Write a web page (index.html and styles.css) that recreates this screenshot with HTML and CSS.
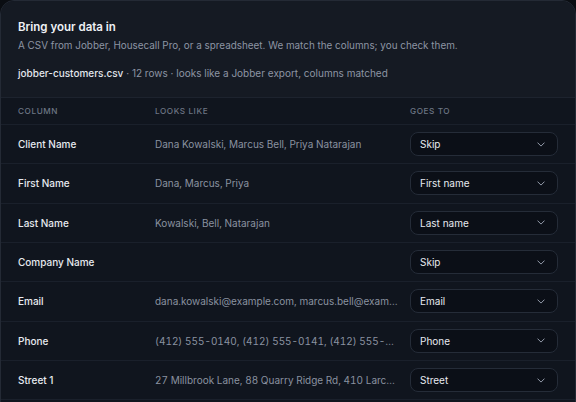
FILE: index.html
```html
<!DOCTYPE html>
<html>
<head>
<meta charset="utf-8">
<link rel="stylesheet" href="styles.css">
</head>
<body>
<div class="card">
  <div class="head">
    <h1 class="title">Bring your data in</h1>
    <p class="sub">A CSV from Jobber, Housecall Pro, or a spreadsheet. We match the columns; you check them.</p>
    <p class="file"><span class="fname">jobber-customers.csv</span> · 12 rows · looks like a Jobber export, columns matched</p>
  </div>
  <div class="table">
    <div class="row thead">
      <div class="c1">Column</div>
      <div class="c2">Looks like</div>
      <div class="c3">Goes to</div>
    </div>
    <div class="row">
      <div class="c1 name">Client Name</div>
      <div class="c2 sample">Dana Kowalski, Marcus Bell, Priya Natarajan</div>
      <div class="c3"><div class="select"><span>Skip</span><svg class="chev" viewBox="0 0 10 6" width="8" height="5"><path d="M1 1l4 4 4-4" fill="none" stroke="#9aa2b1" stroke-width="1.2" stroke-linecap="round" stroke-linejoin="round"/></svg></div></div>
    </div>
    <div class="row">
      <div class="c1 name">First Name</div>
      <div class="c2 sample">Dana, Marcus, Priya</div>
      <div class="c3"><div class="select"><span>First name</span><svg class="chev" viewBox="0 0 10 6" width="8" height="5"><path d="M1 1l4 4 4-4" fill="none" stroke="#9aa2b1" stroke-width="1.2" stroke-linecap="round" stroke-linejoin="round"/></svg></div></div>
    </div>
    <div class="row">
      <div class="c1 name">Last Name</div>
      <div class="c2 sample">Kowalski, Bell, Natarajan</div>
      <div class="c3"><div class="select"><span>Last name</span><svg class="chev" viewBox="0 0 10 6" width="8" height="5"><path d="M1 1l4 4 4-4" fill="none" stroke="#9aa2b1" stroke-width="1.2" stroke-linecap="round" stroke-linejoin="round"/></svg></div></div>
    </div>
    <div class="row">
      <div class="c1 name">Company Name</div>
      <div class="c2 sample"></div>
      <div class="c3"><div class="select"><span>Skip</span><svg class="chev" viewBox="0 0 10 6" width="8" height="5"><path d="M1 1l4 4 4-4" fill="none" stroke="#9aa2b1" stroke-width="1.2" stroke-linecap="round" stroke-linejoin="round"/></svg></div></div>
    </div>
    <div class="row">
      <div class="c1 name">Email</div>
      <div class="c2 sample">dana.kowalski@example.com, marcus.bell@example.com, priya@natarajan.org</div>
      <div class="c3"><div class="select"><span>Email</span><svg class="chev" viewBox="0 0 10 6" width="8" height="5"><path d="M1 1l4 4 4-4" fill="none" stroke="#9aa2b1" stroke-width="1.2" stroke-linecap="round" stroke-linejoin="round"/></svg></div></div>
    </div>
    <div class="row">
      <div class="c1 name">Phone</div>
      <div class="c2 sample">(412) 555-0140, (412) 555-0141, (412) 555-0142</div>
      <div class="c3"><div class="select"><span>Phone</span><svg class="chev" viewBox="0 0 10 6" width="8" height="5"><path d="M1 1l4 4 4-4" fill="none" stroke="#9aa2b1" stroke-width="1.2" stroke-linecap="round" stroke-linejoin="round"/></svg></div></div>
    </div>
    <div class="row">
      <div class="c1 name">Street 1</div>
      <div class="c2 sample">27 Millbrook Lane, 88 Quarry Ridge Rd, 410 Larch Street</div>
      <div class="c3"><div class="select"><span>Street</span><svg class="chev" viewBox="0 0 10 6" width="8" height="5"><path d="M1 1l4 4 4-4" fill="none" stroke="#9aa2b1" stroke-width="1.2" stroke-linecap="round" stroke-linejoin="round"/></svg></div></div>
    </div>
  </div>
</div>
</body>
</html>
```
FILE: styles.css
```css
html, body {
  margin: 0;
  padding: 0;
  background: #0a0d12;
}
body {
  font-family: Inter, "Noto Sans", sans-serif;
  color: #e7eaf0;
  overflow: hidden;
}
.card {
  width: 576px;
  box-sizing: border-box;
  border: 1px solid #242a35;
  border-radius: 14px;
  background: #10151e;
  overflow: hidden;
  min-height: 420px;
}
.head {
  background: #151a23;
  padding: 17px 18px 16px 17px;
  border-bottom: 1px solid #1d232e;
}
.title {
  margin: 0;
  font-size: 11.5px;
  line-height: 18px;
  font-weight: 600;
  color: #eef1f5;
}
.sub {
  margin: 1px 0 0;
  font-size: 9.9px;
  line-height: 16px;
  color: #8d95a3;
}
.file {
  margin: 12px 0 0;
  font-size: 10px;
  line-height: 16px;
  color: #8d95a3;
}
.fname {
  color: #e3e7ee;
  font-weight: 500;
}
.row {
  display: grid;
  grid-template-columns: 137px 255px 148px;
  padding: 0 18px 0 17px;
  align-items: center;
  height: 39.33px;
  box-sizing: border-box;
  border-bottom: 1px solid #1a202b;
}
.row.thead {
  height: 27px;
  font-size: 8.2px;
  letter-spacing: 0.07em;
  text-transform: uppercase;
  color: #6d7584;
  font-weight: 500;
}
.name {
  font-size: 10px;
  font-weight: 500;
  color: #e7eaf0;
}
.sample {
  font-size: 10px;
  color: #8a92a0;
  white-space: nowrap;
  overflow: hidden;
  text-overflow: ellipsis;
  padding-right: 10px;
  font-variant-numeric: tabular-nums;
}
.select {
  height: 24px;
  box-sizing: border-box;
  border: 1px solid #252c38;
  border-radius: 8px;
  background: #0b0f17;
  display: flex;
  align-items: center;
  justify-content: space-between;
  padding: 0 12px 0 9px;
  font-size: 10px;
  color: #e7eaf0;
}
.chev {
  display: block;
}
```
